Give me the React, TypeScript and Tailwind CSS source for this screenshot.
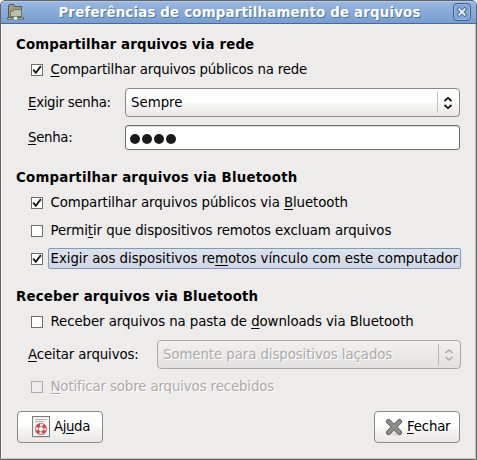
import type { ReactNode } from 'react';

const FONT = "font-['DejaVu_Sans',sans-serif]";

function U({ children }: { children: ReactNode }) {
  return <span className="underline decoration-1 underline-offset-2">{children}</span>;
}

function Heading({ children, className }: { children: ReactNode; className: string }) {
  return (
    <h2 className={`h-5 pl-[14px] text-[13.33px] leading-5 font-bold ${className}`}>
      {children}
    </h2>
  );
}

function Box({ checked, disabled }: { checked?: boolean; disabled?: boolean }) {
  return (
    <span
      className={`mt-[5px] flex size-3 shrink-0 items-center justify-center border ${
        disabled ? 'border-[#adaba8] bg-[#edeceb]' : 'border-[#6f6d6a] bg-white'
      }`}
    >
      {checked && (
        <svg width="10" height="10" viewBox="0 0 10 10" fill="none" stroke="#1a1a1a" strokeWidth="1.9">
          <path d="M1.2 4.7 L3.8 7.8 L8.9 1.1" />
        </svg>
      )}
    </span>
  );
}

function Check({
  children,
  className,
  checked,
  disabled,
  focused,
}: {
  children: ReactNode;
  className: string;
  checked?: boolean;
  disabled?: boolean;
  focused?: boolean;
}) {
  return (
    <div className={`flex h-[21px] items-start pl-[29px] ${className}`}>
      <Box checked={checked} disabled={disabled} />
      <span
        className={`ml-[5px] flex h-[21px] items-center rounded-[2px] border pl-[1.5px] ${
          focused ? 'w-[413px] border-[#8099bd] bg-gradient-to-b from-[#dde2ea] to-[#d0d8e5]' : 'border-transparent'
        } ${disabled ? 'text-[#acaaa7] [text-shadow:1px_1px_0_#fff]' : ''}`}
      >
        <span>{children}</span>
      </span>
    </div>
  );
}

function Combo({ children, className, disabled }: { children: ReactNode; className: string; disabled?: boolean }) {
  return (
    <div
      className={`flex h-[29px] items-center rounded-[4px] border pl-[5px] ${
        disabled
          ? 'border-[#aaa8a5] bg-gradient-to-b from-[#f1f0ef] to-[#e3e2e0] text-[#acaaa7] [text-shadow:1px_1px_0_#fff]'
          : 'border-[#8b8986] bg-[linear-gradient(#fff_50%,#f8f8f7_50%,#e9e8e6)]'
      } ${className}`}
    >
      <span className="flex-1">{children}</span>
      <span className={`h-[21px] w-px ${disabled ? 'bg-[#b9b7b4]' : 'bg-[#c4c2bf]'}`} />
      <svg
        className="mr-[6px] ml-[5px]"
        width="10"
        height="14"
        viewBox="0 0 10 14"
        fill="none"
        stroke={disabled ? '#aaa8a5' : '#111'}
        strokeWidth={disabled ? 1.3 : 1.7}
      >
        <path d="M1.5 5 L5 1.9 L8.5 5 M1.5 9 L5 12.1 L8.5 9" />
      </svg>
    </div>
  );
}

function FolderIcon() {
  return (
    <svg width="17" height="17" viewBox="0 0 17 17">
      <path d="M1.5 13.5V1.5l.8-1h4.4l1 2h6.8v11z" fill="#9a9c86" stroke="#56584c" />
      <path d="M3.5 12.5v-5.5h2.5l1-1.5h7.500v7z" fill="#bfc0ac" stroke="#72745f" />
      <path d="M0 14.5h17" stroke="#5d5e54" strokeWidth="2" />
      <path d="M1 14.5h5M11 14.5h5" stroke="#a9aa9c" strokeWidth="1" />
      <rect x="6.5" y="12.5" width="4" height="3.5" rx="1" fill="#f2f2ef" stroke="#77786c" strokeWidth=".6" />
    </svg>
  );
}

function HelpIcon() {
  return (
    <svg width="18" height="22" viewBox="0 0 18 22">
      <rect x="0" y="19.5" width="18" height="2" rx="1" fill="#c4c2bf" />
      <rect x=".5" y=".5" width="17" height="20" fill="#f3f3f2" stroke="#7d7b78" />
      <path d="M3 3.5h12M3 5.5h9" stroke="#b5b4b1" />
      <circle cx="9" cy="13" r="4.1" fill="none" stroke="#f4eeee" strokeWidth="3.2" />
      <circle cx="9" cy="13" r="4.1" fill="none" stroke="#d64545" strokeWidth="3" strokeDasharray="3.6 2.84" strokeDashoffset="-1.42" />
      <circle cx="9" cy="13" r="5.7" fill="none" stroke="#a85454" strokeWidth=".7" />
      <circle cx="9" cy="13" r="2.4" fill="#fff" stroke="#a85454" strokeWidth=".7" />
    </svg>
  );
}

function CloseIcon() {
  return (
    <svg width="18" height="18" viewBox="0 0 18 18">
      <ellipse cx="9" cy="16" rx="8" ry="1.6" fill="#dddcda" />
      <path d="M3.5 3.5l11 11M14.5 3.5l-11 11" stroke="#60625e" strokeWidth="5" strokeLinecap="round" />
      <path d="M3.5 3.5l11 11M14.5 3.5l-11 11" stroke="#8c8e8a" strokeWidth="3.2" strokeLinecap="round" />
    </svg>
  );
}

function Button({ children, className }: { children: ReactNode; className: string }) {
  return (
    <button
      className={`flex h-8 w-[86px] items-center rounded-[4px] border border-[#8b8986] bg-[linear-gradient(#fff_50%,#f8f8f7_50%,#e9e8e6)] ${className}`}
    >
      {children}
    </button>
  );
}

export default function App() {
  return (
    <div className="h-[460px] w-[477px] overflow-hidden bg-white">
      <div
        className={`flex h-[460px] w-[477px] flex-col overflow-hidden rounded-t-[5px] border border-[#656361] bg-[#edeceb] text-[13.33px] leading-5 whitespace-nowrap text-black ${FONT}`}
      >
        <header className="-mx-px -mt-px flex h-6 shrink-0 items-center rounded-t-[5px] border border-t-[#34517b] border-r-[#48699c] border-b-[#48699c] border-l-[#48699c] bg-gradient-to-b from-[#9ab8e2] to-[#779dcf] pr-[5px] pl-[6px] shadow-[inset_0_1px_0_#b3caeb]">
          <FolderIcon />
          <span className="flex-1 pt-[2px] pl-[2px] text-center text-[13.33px] font-bold tracking-[0.2px] text-white [text-shadow:1px_1px_0_#4f74a8]">
            Preferências de compartilhamento de arquivos
          </span>
          <span className="flex size-[18px] items-center justify-center rounded-[4px] border border-[#3f618f] bg-[#84a7d6] shadow-[inset_0_0_0_1px_#98b7e0]">
            <svg width="12" height="12" viewBox="0 0 12 12" fill="none" strokeLinecap="square">
              <path d="M3.2 3.2l5.6 5.6M8.8 3.2l-5.6 5.6" stroke="#486c9f" strokeWidth="3.6" />
              <path d="M3.2 3.2l5.6 5.6M8.8 3.2l-5.6 5.6" stroke="#f4f8fd" strokeWidth="1.7" />
            </svg>
          </span>
        </header>
        <main className="flex min-h-0 flex-1 flex-col border-r border-b border-l border-r-[#c9c7c4] border-b-[#c9c7c4] border-l-[#f8f8f7]">
          <Heading className="mt-[11px] tracking-[0.15px]">Compartilhar arquivos via rede</Heading>
          <Check checked className="mt-1 tracking-[-0.17px]">
            <U>C</U>ompartilhar arquivos públicos na rede
          </Check>
          <div className="mt-2 flex h-[29px] items-center pl-[26px]">
            <span className="w-[97px] tracking-[-0.3px]">
              <U>E</U>xigir senha:
            </span>
            <Combo className="w-[335px]">Sempre</Combo>
          </div>
          <div className="mt-2 flex h-[25px] items-center pl-[26px]">
            <span className="w-[97px] tracking-[-0.3px]">
              <U>S</U>enha:
            </span>
            <div className="flex h-[25px] w-[335px] items-center gap-[2px] rounded-[3px] border border-[#6f6d6a] bg-white pl-1 shadow-[inset_0_1px_0_#dedcda]">
              {[0, 1, 2, 3].map((i) => (
                <span key={i} className="mt-[3px] size-[10px] rounded-full bg-[#1a1a1a]" />
              ))}
            </div>
          </div>
          <Heading className="mt-[18px] tracking-[0.23px]">Compartilhar arquivos via Bluetooth</Heading>
          <Check checked className="mt-1 tracking-[-0.08px]">
            Compartilhar arquivos públicos via <U>B</U>luetooth
          </Check>
          <Check className="mt-[7px] tracking-[-0.08px]">
            Permi<U>t</U>ir que dispositivos remotos excluam arquivos
          </Check>
          <Check checked focused className="mt-[7px] tracking-[-0.03px]">
            Exigir aos dispositivos re<U>m</U>otos vínculo com este computador
          </Check>
          <Heading className="mt-[18px] tracking-[0.2px]">Receber arquivos via Bluetooth</Heading>
          <Check className="mt-1 tracking-[-0.08px]">
            Receber arquivos na pasta de <U>d</U>ownloads via Bluetooth
          </Check>
          <div className="mt-2 flex h-[29px] items-center pl-[26px]">
            <span className="w-[129px] tracking-[-0.12px]">
              <U>A</U>ceitar arquivos:
            </span>
            <Combo disabled className="w-[304px] tracking-[-0.08px]">
              Somente para dispositivos laçados
            </Combo>
          </div>
          <Check disabled className="mt-[7px] tracking-[-0.12px]">
            <U>N</U>otificar sobre arquivos recebidos
          </Check>
          <footer className="mt-[14px] flex justify-between pr-[15px] pl-[15px]">
            <Button className="pl-[14px]">
              <HelpIcon />
              <span className="ml-1 tracking-[-0.4px]">
                Aj<U>u</U>da
              </span>
            </Button>
            <Button className="pl-[10px]">
              <CloseIcon />
              <span className="ml-1 tracking-[-0.2px]">
                <U>F</U>echar
              </span>
            </Button>
          </footer>
        </main>
      </div>
    </div>
  );
}
